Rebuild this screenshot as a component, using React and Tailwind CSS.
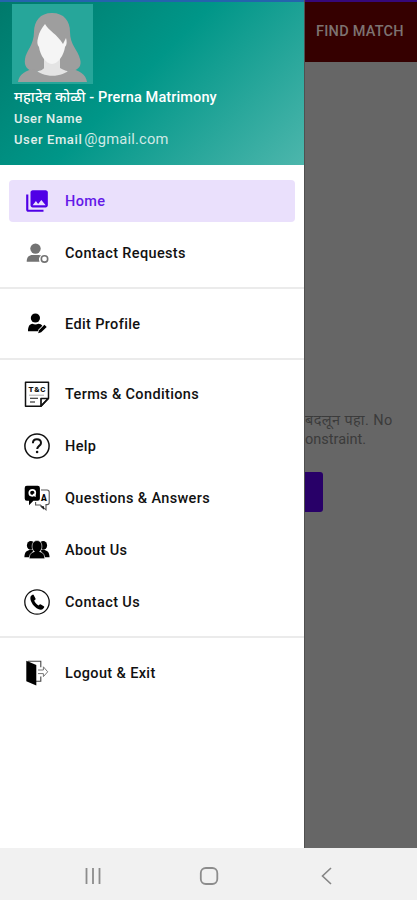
import { MdPhotoLibrary } from 'react-icons/md';

const labelFont = "font-['Roboto','Noto_Sans_Devanagari','Noto_Sans',sans-serif]";

function ContactRequestsIcon() {
  return (
    <svg viewBox="0 0 26 26" className="size-[26px]" fill="#737373">
      <circle cx="11.5" cy="8.6" r="5.2" />
      <path d="M2.7 21.7c0-4.8 2.4-6.8 5.8-6.8h6.2c1 0 1.7.2 2.4.7a5 5 0 0 0-1.6 6.1z" />
      <circle cx="20.5" cy="18.9" r="3.2" fill="none" stroke="#737373" strokeWidth="1.6" />
    </svg>
  );
}

function EditProfileIcon() {
  return (
    <svg viewBox="0 0 26 26" className="size-[26px]" fill="#000">
      <circle cx="11.4" cy="7" r="4.6" />
      <path d="M4 20.2c0-4.7 1.5-7.2 4.4-7.5 2 .9 4 .9 6 0 1.8.1 3.2.8 3.9 2.1l-4 4-.4 1.4z" />
      <path d="M20.4 13.8l2.3 2.2-5.5 5.3-3 .9.8-3z" />
    </svg>
  );
}

function TermsIcon() {
  return (
    <svg viewBox="0 0 26 26" className="size-[26px]" fill="none" stroke="#111">
      <path d="M1.5 1.2h23v16l-7.5 8H1.5z" strokeWidth="1.5" strokeLinejoin="round" />
      <path d="M17 25v-7.5h7.3z" strokeWidth="1.7" strokeLinejoin="round" />
      <path d="M5 14.2h15" stroke="#aaa" />
      <path d="M6 17.3h8M6 21h5" strokeWidth="1.1" />
      <text
        x="13"
        y="10.8"
        textAnchor="middle"
        fontSize="7.9"
        fontWeight="900"
        fontFamily="Roboto, sans-serif"
        fill="#111"
        stroke="none"
        textLength="17"
      >
        T&amp;C
      </text>
    </svg>
  );
}

function HelpIcon() {
  return (
    <svg viewBox="0 0 26 26" className="size-[26px]" fill="none" stroke="#111">
      <circle cx="13" cy="13" r="12.1" strokeWidth="1.5" />
      <path d="M8.9 10.2c0-2.5 1.6-4 4-4s4.1 1.4 4.1 3.7c0 3.1-3.8 2.9-3.8 6.2" strokeWidth="2" />
      <circle cx="13.1" cy="19" r="1.3" fill="#111" stroke="none" />
    </svg>
  );
}

function QuestionsIcon() {
  return (
    <svg viewBox="0 0 26 26" className="size-[26px]">
      <path
        d="M17 5h6q2.2 0 2.2 2.2v10.2q0 2.2-2.2 2.2h-1v5.2L16.4 20h-4.8v-3"
        fill="none"
        stroke="#555"
        strokeWidth="1.1"
      />
      <path d="M16 21.2h4v3.5z" fill="#222" />
      <path d="M2.8.8h10.9q2.2 0 2.2 2.2v10.5q0 2.2-2.2 2.2H9.4L5 20.2v-4.5H2.8Q.7 15.7.7 13.5V3Q.7.8 2.8.8z" fill="#000" />
      <circle cx="8.3" cy="7.8" r="3" fill="none" stroke="#fff" strokeWidth="1.7" />
      <path d="M9 9l2.6 2.5" stroke="#fff" strokeWidth="1.5" />
      <text x="20" y="16.2" textAnchor="middle" fontSize="8.5" fontWeight="900" fontFamily="Roboto, sans-serif">
        A
      </text>
    </svg>
  );
}

function AboutIcon() {
  return (
    <svg viewBox="0 0 26 26" className="size-[26px]" fill="#000">
      <ellipse cx="6.8" cy="8.4" rx="3.9" ry="4.4" />
      <ellipse cx="19.2" cy="8.4" rx="3.9" ry="4.4" />
      <path d="M.4 20.2c.2-4.3 1.5-6.3 4.9-7.2h4.4l-4.5 7.2zM25.6 20.2c-.2-4.3-1.5-6.3-4.9-7.2h-4.4l4.5 7.2z" />
      <path
        d="M5.3 21.7c0-4.4 1.6-6 5.1-7.1-1.7-1.3-2.3-3.2-2.3-5.5 0-3.4 1.9-5.6 4.9-5.6s4.9 2.2 4.9 5.6c0 2.3-.6 4.2-2.3 5.5 3.5 1.1 5.1 2.7 5.1 7.1z"
        stroke="#fff"
        strokeWidth=".6"
      />
    </svg>
  );
}

function PhoneIcon() {
  return (
    <svg viewBox="0 0 26 26" className="size-[26px]">
      <circle cx="13" cy="13" r="12.2" fill="none" stroke="#111" strokeWidth="1.3" />
      <path
        d="M7.1 6.7l1.5-1q.7-.3 1.2.5l1.7 3.2q.4.8-.3 1.3l-1 .8c.7 2.1 2.2 3.8 4.4 4.9l1-.9q.6-.5 1.3-.1l2.9 1.8q.8.6.3 1.3l-1.2 1.5c-1.6 1.5-4.9.5-7.7-2C7.8 15.1 5 9.2 7.1 6.7z"
        fill="#000"
      />
    </svg>
  );
}

function LogoutIcon() {
  return (
    <svg viewBox="0 0 26 26" className="size-[26px]" fill="none">
      <path d="M4 1.2h12.8v6M16.8 16.5v4.8h-5" stroke="#444" strokeWidth="1.1" />
      <path d="M2.3.8l10 4.3v20.3L2.3 21.2z" fill="#000" />
      <path d="M14 10h5.4V6.8l4.3 5-4.3 4.8v-3H14" stroke="#777" strokeWidth="1" />
    </svg>
  );
}

const groups = [
  [
    { label: 'Home', icon: <MdPhotoLibrary className="size-[26px] text-[#5000e6]" />, active: true },
    { label: 'Contact Requests', icon: <ContactRequestsIcon /> },
  ],
  [{ label: 'Edit Profile', icon: <EditProfileIcon /> }],
  [
    { label: 'Terms & Conditions', icon: <TermsIcon /> },
    { label: 'Help', icon: <HelpIcon /> },
    { label: 'Questions & Answers', icon: <QuestionsIcon /> },
    { label: 'About Us', icon: <AboutIcon /> },
    { label: 'Contact Us', icon: <PhoneIcon /> },
  ],
  [{ label: 'Logout & Exit', icon: <LogoutIcon /> }],
];

function Avatar() {
  return (
    <svg viewBox="0 0 81 80" className="block h-[80px] w-[81px] bg-[#26a69a]">
      <path
        d="M40 9c-12 0-18 8-18 19 0 13-8 19-9 27-1 7 2 11 8 12h39c7-1 10-6 8-12-2-9-10-14-10-27 0-11-6-19-18-19z"
        fill="#9e9e9e"
      />
      <path d="M32 50h16v14c3 2 7 3 11 4l-9 6H31l-8-6c4-1 8-2 9-4z" fill="#e4e4e4" />
      <path d="M33 20c4 7 12 10 18 20 1-2 2-4 3-6 1 3 1 7-1 9-1 8-7 17-13 17S28 51 27 43c-2-2-2-6-1-9 1-6 4-10 7-14z" fill="#f5f5f5" />
      <path d="M6 78c1-8 8-12 17-13 7 9 28 9 35 0 9 1 16 5 17 13z" fill="#9e9e9e" />
    </svg>
  );
}

function DrawerHeader() {
  return (
    <header className="h-[165px] border-t-2 border-[#2464ad] bg-[linear-gradient(135deg,#00796b_0%,#009688_46%,#4db6ac_100%)] pt-[2px] text-white">
      <div className="ml-[12px] w-[81px]">
        <Avatar />
      </div>
      <div className="ml-[14px] flex flex-col whitespace-nowrap">
        <p className="mt-[3px] h-[21px] text-[14.5px] leading-[21px] font-medium tracking-[0.12px]">
          महादेव कोळी - Prerna Matrimony
        </p>
        <p className="h-[21px] text-[13px] leading-[22px] font-medium tracking-[0.42px] text-[#e0eeeb]">User Name</p>
        <p className="flex h-[21px] text-[13px] leading-[22px] text-[#e0eeeb]">
          <span className="font-medium tracking-[0.6px]">User Email</span>
          <span className="-mt-px ml-[2px] text-[14.7px] tracking-[0.2px] text-[#d0e9e5]">@gmail.com</span>
        </p>
      </div>
    </header>
  );
}

function MenuItem({ label, icon, active }) {
  return (
    <li className="flex h-[52px] items-center px-[9px]">
      <a
        className={`flex h-[42px] flex-1 items-center rounded-[4px] pl-[15px] ${
          active ? 'bg-[#eae0fc] text-[#6419e8]' : 'text-[#111]'
        }`}
      >
        {icon}
        <span className="ml-[15px] pt-[2px] text-[14.5px] font-medium tracking-[0.36px]">{label}</span>
      </a>
    </li>
  );
}

function NavBar() {
  return (
    <nav className="flex h-[52px] items-center justify-between bg-[#f1f1f1] pr-[81px] pl-[82px] pt-[3px]">
      <svg viewBox="0 0 22 22" className="size-[22px]" stroke="#8c8c8c" strokeWidth="1.8">
        <path d="M4.5 3v16M11 3v16M17.5 3v16" />
      </svg>
      <svg viewBox="0 0 22 22" className="size-[22px]" fill="none" stroke="#8c8c8c" strokeWidth="1.8">
        <rect x="2.8" y="3" width="16.5" height="16" rx="5" />
      </svg>
      <svg viewBox="0 0 22 22" className="size-[22px]" fill="none" stroke="#858585" strokeWidth="1.6">
        <path d="M17 3l-8.5 8 8.5 8" />
      </svg>
    </nav>
  );
}

export default function App() {
  return (
    <div className={`flex h-[900px] w-[417px] flex-col overflow-hidden bg-white ${labelFont}`}>
      <div className="flex h-[848px]">
        <aside className="w-[304px] shrink-0 bg-white">
          <DrawerHeader />
          <div className="pt-[10px]">
            {groups.map((items, i) => (
              <div key={i}>
                {i > 0 && <div className="mt-[8px] mb-[8.5px] h-[2px] bg-[#ebebeb]" />}
                <ul>
                  {items.map((item) => (
                    <MenuItem key={item.label} {...item} />
                  ))}
                </ul>
              </div>
            ))}
          </div>
        </aside>

        {/* Dimmed page behind the drawer */}
        <main className="flex w-[113px] flex-col overflow-hidden border-l border-[#505050] bg-[#666]">
          <div className="flex h-[62px] shrink-0 items-center border-t-2 border-[#36087a] bg-[#350000] pl-[11px] text-[14.5px] font-medium tracking-[0.25px] whitespace-nowrap text-[#7d7371]">
            FIND MATCH
          </div>
          <div className="mt-[349px] flex flex-col text-[14.5px] leading-[19px] whitespace-nowrap text-[#3b3b3b]">
            <p className="tracking-[0.4px]">बदलून पहा. No</p>
            <p>onstraint.</p>
          </div>
          <div className="mt-[23px] h-[40px] w-[18px] rounded-r-[3px] bg-[#280068]" />
        </main>
      </div>
      <NavBar />
    </div>
  );
}
